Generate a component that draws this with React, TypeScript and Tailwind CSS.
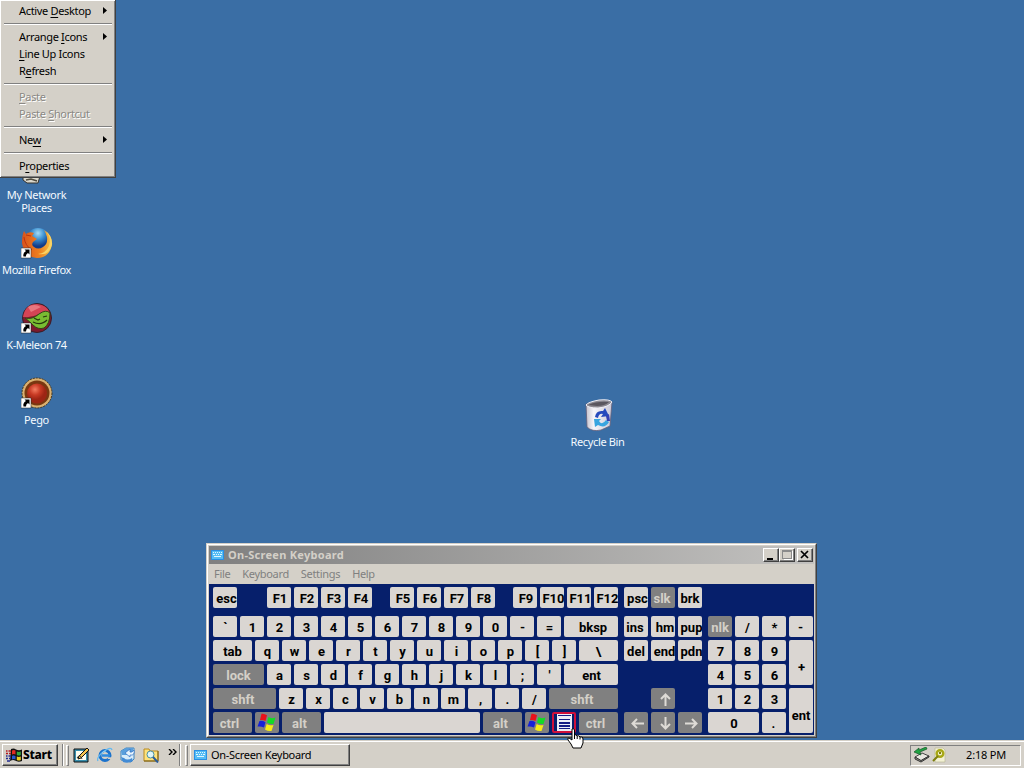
import type { ReactNode } from 'react'
import { clsx } from 'clsx'

type KeyDef = {
  label: ReactNode
  width?: string
  dark?: boolean
  focused?: boolean
  height?: string
  shift?: string
}

const k = (label: ReactNode, width = 'w-6', dark = false, shift = 'pl-px'): KeyDef => ({ label, width, dark, shift })

const long = 'pl-[3px]'

function KeyButton({ label, width = 'w-6', dark, focused, height = 'h-[21px] pt-px', shift = 'pl-px' }: KeyDef) {
  return (
    <button
      className={clsx(
        'flex flex-none items-center justify-center overflow-hidden rounded-[2px] font-[Roboto,sans-serif] text-[13px] leading-none font-bold whitespace-nowrap',
        focused ? 'bg-[#061f6b] ring-2 ring-[#d0103a] ring-inset' : dark ? 'bg-[#808080] text-[#d4d0c8]' : 'bg-[#dad6d2] text-black',
        width,
        height,
        shift
      )}
    >
      {label}
    </button>
  )
}

function KeyRow({ keys }: { keys: KeyDef[] }) {
  return (
    <div className="flex gap-[3px]">
      {keys.map((item, i) => (
        <KeyButton key={i} {...item} />
      ))}
    </div>
  )
}

function WindowsFlag() {
  return (
    <svg className="-mt-px mr-px h-[19px] w-[20px] flex-none" viewBox="0 0 20 19">
      <path d="M4.500 .8 Q7 .2 10 2.300 L8.500 8 Q6 6.500 3 7Z" fill="#e8111b" />
      <path d="M11.500 4 Q14 6 18.500 4.500 L16.500 11 Q13 11.500 10 9.500Z" fill="#12dc24" />
      <path d="M2.500 7.900 Q6 7.500 8.500 9.300 L7 14.500 Q4 13 .5 13.500Z" fill="#1520d8" />
      <path d="M9.700 11 Q12.500 13 16.500 12 L14.500 18 Q11 18.500 8 16.500Z" fill="#f6ed15" />
    </svg>
  )
}

function MenuGlyph() {
  return (
    <svg className="-mt-px h-[17px] w-[15px] flex-none" viewBox="0 0 15 17" shapeRendering="crispEdges">
      <path d="M0 0H15V17H0Z" fill="#eceef8" />
      <path d="M1 1H14V2H1ZM2 5H13V6H2ZM2 8H13V10H2ZM2 11H13V13H2ZM2 14H13V15H2Z" fill="#151c86" />
    </svg>
  )
}

function ArrowGlyph({ turn = 'rotate-0' }: { turn?: string }) {
  return (
    <svg className={clsx('h-[13px] w-[13px] flex-none', turn)} viewBox="0 0 13 13" fill="none" stroke="#dedbd6" strokeWidth="2">
      <path d="M1 6.500H13M6 2L1.500 6.500L6 11" />
    </svg>
  )
}

const functionKeys = {
  left: [k('F1', 'w-6', false, 'pl-[2px]'), k('F2', 'w-6', false, 'pl-[2px]'), k('F3', 'w-6', false, 'pl-[2px]'), k('F4', 'w-6', false, 'pl-[2px]')],
  middle: [k('F5', 'w-6', false, 'pl-[2px]'), k('F6', 'w-6', false, 'pl-[2px]'), k('F7', 'w-6', false, 'pl-[2px]'), k('F8', 'w-6', false, 'pl-[2px]')],
  right: [k('F9', 'w-6', false, 'pl-[2px]'), k('F10', 'w-6', false, long), k('F11', 'w-6', false, long), k('F12', 'w-6', false, long)],
  system: [k('psc', 'w-6', false, long), k('slk', 'w-6', true, 'pr-[2px]'), k('brk', 'w-6', false, 'pl-0')],
}

const mainRows: KeyDef[][] = [
  [...'`1234567890-='].map((c) => k(c)).concat(k('bksp', 'w-[54px]', false, 'pl-1')),
  [k('tab', 'w-[39px]', false, 'pl-0'), ...[...'qwertyuiop[]'].map((c) => k(c)), k('\\', 'w-[39px]', false, 'pl-0')],
  [k('lock', 'w-[51px]', true, 'pl-0'), ...[..."asdfghjkl;'"].map((c) => k(c)), k('ent', 'w-[54px]', false, 'pl-px')],
  [k('shft', 'w-[63px]', true, 'pr-[3px]'), ...[...'zxcvbnm,./'].map((c) => k(c)), k('shft', 'w-[69px]', true, 'pr-[3px]')],
  [
    k('ctrl', 'w-[39px]', true, 'pr-[6px]'),
    k(<WindowsFlag />, 'w-6', true),
    k('alt', 'w-[39px]', true, 'pr-1'),
    k('', 'w-[156px]'),
    k('alt', 'w-[39px]', true, 'pr-[4px]'),
    k(<WindowsFlag />, 'w-6', true),
    { label: <MenuGlyph />, focused: true, shift: 'pl-0' },
    k('ctrl', 'w-[39px]', true, 'pr-[6px]'),
  ],
]

const editRows = [
  [k('ins', 'w-6', false, 'pr-[2px]'), k('hm', 'w-6', false, 'pl-1'), k('pup', 'w-6', false, long)],
  [k('del', 'w-6', false, 'pl-0'), k('end', 'w-6', false, long), k('pdn', 'w-6', false, long)],
]

const numRows = [
  [k('7'), k('8'), k('9')],
  [k('4'), k('5'), k('6')],
  [k('1'), k('2'), k('3')],
  [k('0', 'w-[51px]'), k('.', 'w-6', false, 'pr-px')],
]

function KeyboardIcon() {
  return (
    <svg className="h-[12px] w-[14px] flex-none" viewBox="0 0 14 12" shapeRendering="crispEdges">
      <path d="M0 1H13V11H0Z" fill="#2a8fe4" />
      <path d="M1 2H12V10H1Z" fill="#55bdf5" />
      <path d="M2 3H3V4H2ZM4 3H5V4H4ZM6 3H7V4H6ZM8 3H9V4H8ZM10 3H11V4H10ZM2 5H4V6H2ZM5 5H6V6H5ZM7 5H8V6H7ZM9 5H11V6H9ZM3 7H10V8H3Z" fill="#dff5ff" />
    </svg>
  )
}

function CaptionButton({ children }: { children: ReactNode }) {
  return (
    <button className="h-[14px] w-4 border border-t-white border-r-[#404040] border-b-[#404040] border-l-white bg-[#d4d0c8] shadow-[inset_-1px_-1px_0_#808080]">
      <svg className="h-3 w-[14px]" viewBox="0 0 14 12" fill="none" shapeRendering="crispEdges">
        {children}
      </svg>
    </button>
  )
}

function OnScreenKeyboard() {
  return (
    <section className="absolute top-[543px] left-[206px] h-[195px] w-[611px] border border-t-[#d4d0c8] border-r-[#404040] border-b-[#404040] border-l-[#d4d0c8] bg-[#d4d0c8]">
      <div className="h-full border border-t-white border-r-[#808080] border-b-[#808080] border-l-white p-px">
        <header className="flex h-[18px] items-center bg-linear-to-r from-[#808080] to-[#c3c2c0] pr-px pl-[2px]">
          <KeyboardIcon />
          <h1 className="ml-[3px] flex-1 text-[11px] font-bold tracking-[0.28px] text-[#d4d0c8]">On-Screen Keyboard</h1>
          <CaptionButton>
            <path d="M3 9H9V11H3Z" fill="#000" />
          </CaptionButton>
          <CaptionButton>
            <path d="M2.500 1.500H11.500V9.500H2.500ZM2 2.500H11" stroke="#8a8a8a" />
            <path d="M3.500 10.500H12.500V2" stroke="#fff" />
          </CaptionButton>
          <div className="ml-[2px] flex">
            <CaptionButton>
              <path d="M3 2L10 9M10 2L3 9" stroke="#000" strokeWidth="1.700" shapeRendering="auto" />
            </CaptionButton>
          </div>
        </header>
        <nav className="flex h-5 items-center gap-3 pl-[5px] text-[11px] tracking-[-0.32px] text-[#808080]">
          <span>File</span>
          <span>Keyboard</span>
          <span>Settings</span>
          <span>Help</span>
        </nav>
        <div className="h-[151px] bg-[#061f6b] pt-[3px] pl-1">
          <div className="flex">
            <KeyRow keys={[k('esc', 'w-6', false, long)]} />
            <div className="ml-[30px]"><KeyRow keys={functionKeys.left} /></div>
            <div className="ml-[18px]"><KeyRow keys={functionKeys.middle} /></div>
            <div className="ml-[18px]"><KeyRow keys={functionKeys.right} /></div>
            <div className="ml-[6px]"><KeyRow keys={functionKeys.system} /></div>
          </div>
          <div className="mt-2 flex gap-[6px]">
            <div className="flex w-[405px] flex-col gap-[3px]">
              {mainRows.map((row, i) => (
                <KeyRow key={i} keys={row} />
              ))}
            </div>
            <div className="flex w-[78px] flex-col gap-[3px]">
              {editRows.map((row, i) => (
                <KeyRow key={i} keys={row} />
              ))}
              <div className="mt-6 flex justify-center">
                <KeyButton label={<ArrowGlyph turn="rotate-90" />} dark shift="pl-1" />
              </div>
              <KeyRow keys={[
                k(<ArrowGlyph />, 'w-6', true, 'pl-[3px]'),
                k(<ArrowGlyph turn="-rotate-90" />, 'w-6', true, 'pl-1'),
                k(<ArrowGlyph turn="rotate-180" />, 'w-6', true, 'pl-[2px]'),
              ]} />
            </div>
            <div className="flex w-[105px] flex-col gap-[3px]">
              <KeyRow keys={[k('nlk', 'w-6', true, 'pl-0'), k('/'), k('*'), k('-', 'w-6', false, 'pr-px')]} />
              <div className="flex gap-[3px]">
                <div className="flex flex-col gap-[3px]">
                  {numRows.map((row, i) => (
                    <KeyRow key={i} keys={row} />
                  ))}
                </div>
                <div className="flex flex-col gap-[3px]">
                  <KeyButton label="+" height="h-[45px] pt-[9px]" />
                  <KeyButton label="ent" height="h-[45px] pt-[9px]" shift="pl-0" />
                </div>
              </div>
            </div>
          </div>
        </div>
      </div>
    </section>
  )
}

function MenuItem({ before = '', mark, after = '', submenu, disabled }: { before?: string; mark: string; after?: string; submenu?: boolean; disabled?: boolean }) {
  return (
    <li className={clsx('flex h-[17px] items-center pr-[8px] pl-[17px]', disabled && 'text-[#8b8985] [text-shadow:1px_1px_0_#fff]')}>
      <span className="flex-1 whitespace-pre">
        {before}
        <span className="underline underline-offset-[1.500px]">{mark}</span>
        {after}
      </span>
      {submenu && (
        <svg className="h-[7px] w-1" viewBox="0 0 4 7">
          <path d="M0 0L4 3.500L0 7Z" />
        </svg>
      )}
    </li>
  )
}

function Divider() {
  return (
    <li className="flex h-[9px] items-center pr-[3px] pl-[2px]">
      <span className="h-[2px] flex-1 border-t border-b border-t-[#808080] border-b-white" />
    </li>
  )
}

function ContextMenu() {
  return (
    <ul className="absolute top-0 left-0 h-[178px] w-[116px] border-r border-b border-[#404040] bg-[#d4d0c8] pt-[2px] pl-[2px] text-[11px] leading-[13px] tracking-[-0.33px] text-black shadow-[inset_1px_1px_0_#fff,inset_-1px_-1px_0_#808080]">
      <MenuItem before="Active " mark="D" after="esktop" submenu />
      <Divider />
      <MenuItem before="Arrange " mark="I" after="cons" submenu />
      <MenuItem mark="L" after="ine Up Icons" />
      <MenuItem before="R" mark="e" after="fresh" />
      <Divider />
      <MenuItem mark="P" after="aste" disabled />
      <MenuItem before="Paste " mark="S" after="hortcut" disabled />
      <Divider />
      <MenuItem before="Ne" mark="w" submenu />
      <Divider />
      <MenuItem before="P" mark="r" after="operties" />
    </ul>
  )
}

function ShortcutArrow() {
  return (
    <g>
      <path d="M0 21H10V31H0Z" fill="#fff" stroke="#222" strokeWidth=".5" />
      <path d="M3.500 22.500H8.500V27.500L7 26Q4.800 27 5 29.500H2.500Q1.500 26 5 24Z" fill="#000" />
    </g>
  )
}

function FirefoxIcon() {
  return (
    <svg className="h-8 w-8" viewBox="0 0 32 32">
      <defs>
        <radialGradient id="globe" cx=".5" cy=".2">
          <stop offset="0" stopColor="#a5dcf5" />
          <stop offset=".5" stopColor="#3a8ed0" />
          <stop offset="1" stopColor="#123b88" />
        </radialGradient>
        <linearGradient id="fox" x1="0" x2="1">
          <stop offset="0" stopColor="#d9521c" />
          <stop offset=".6" stopColor="#ee8220" />
          <stop offset="1" stopColor="#f5c64a" />
        </linearGradient>
      </defs>
      <circle cx="17" cy="14" r="13" fill="url(#globe)" />
      <path d="M3 4L5 7Q8 4 13 6L11 9L16 12L12 15Q10 18 13 20Q17 23 22 20Q27 17 26 10Q25 6 23 3Q32 9 31 18Q28 31 16 31Q3 30 1 16Q1 8 3 4Z" fill="url(#fox)" />
      <path d="M25 4Q31 12 28 19Q25 26 17 27Q29 29 31 17Q31 9 25 4Z" fill="#f9d365" />
      <path d="M3 10Q4 19 11 23M5 8L10 9" fill="none" stroke="#bd3510" />
      <ShortcutArrow />
    </svg>
  )
}

function MelonIcon() {
  return (
    <svg className="h-8 w-8" viewBox="0 0 32 32">
      <circle cx="16" cy="16" r="14.500" fill="#7d1a2c" stroke="#34202a" />
      <path d="M2 15Q4 2 16 2Q26 3 29 11Q25 8 18 12Q10 16 3 15Z" fill="#d44455" />
      <path d="M7 5Q13 1 20 5L10 10Z" fill="#f08d91" opacity=".7" />
      <path d="M4 16Q11 18 18 12Q25 7 29 11Q29 22 23 26Q17 28 12 23Q8 19 4 16Z" fill="#79bd32" stroke="#354518" />
      <path d="M13 16L17 18L19 17M22 15L26 14M12 20Q20 24 26 18" fill="none" stroke="#26370e" strokeWidth="1.200" />
      <ShortcutArrow />
    </svg>
  )
}

function PegoIcon() {
  return (
    <svg className="h-8 w-8" viewBox="0 0 32 32">
      <defs>
        <radialGradient id="marble" cx=".4" cy=".3">
          <stop offset="0" stopColor="#f47d61" />
          <stop offset=".55" stopColor="#c83a24" />
          <stop offset="1" stopColor="#9d2514" />
        </radialGradient>
      </defs>
      <circle cx="16" cy="16" r="15" fill="#d9b070" stroke="#44351e" strokeDasharray="2 1" />
      <circle cx="16" cy="16" r="12.500" fill="#793710" />
      <circle cx="16" cy="16.500" r="10" fill="url(#marble)" />
      <ShortcutArrow />
    </svg>
  )
}

function RecycleIcon() {
  return (
    <svg className="h-8 w-8" viewBox="0 0 32 32">
      <defs>
        <linearGradient id="bin" x1="0" x2="1">
          <stop offset="0" stopColor="#c5c2cc" />
          <stop offset=".3" stopColor="#f6f5fa" />
          <stop offset="1" stopColor="#cbc8d6" />
        </linearGradient>
      </defs>
      <path d="M4 5L5 28Q10 33 19 31L28 27L30 3Z" fill="url(#bin)" stroke="#655f78" strokeWidth=".8" />
      <path d="M4 6Q6 3 17 1Q28 0 30 3Q27 8 16 9Q6 9 4 6Z" fill="#8d8a92" stroke="#eeedf5" />
      <path d="M6 6Q15 2 27 3Q23 7 15 7Z" fill="#5a565f" />
      <path d="M13 18Q14 11 21 12L23 9L27 17L19 18L21 15Q17 14 16 19Z" fill="#2549bd" />
      <path d="M12 20L19 20L17 22Q20 27 24 21L27 23Q23 30 16 26L13 28Z" fill="#38a5e0" />
      <path d="M24 17L27 15L28 22L25 22Z" fill="#3340b4" />
    </svg>
  )
}

const shortcuts = [
  { name: 'Mozilla Firefox', icon: <FirefoxIcon />, place: 'top-[227px] left-0' },
  { name: 'K-Meleon 74', icon: <MelonIcon />, place: 'top-[302px] left-0' },
  { name: 'Pego', icon: <PegoIcon />, place: 'top-[377px] left-0' },
  { name: 'Recycle Bin', icon: <RecycleIcon />, place: 'top-[399px] left-[561px]' },
]

function NetworkShortcut() {
  return (
    <div className="absolute top-[152px] left-0 flex w-[73px] flex-col items-center text-center text-[11px] leading-[13px] tracking-[-0.33px] text-[#f4faff]">
      <svg className="h-8 w-8" viewBox="0 0 32 32">
        <path d="M2 24H19L17 31H6L2 28Z" fill="#d9d7cc" stroke="#35322c" />
        <path d="M5 28L10 27L16 29" fill="none" stroke="#4f4a3d" strokeWidth="1.500" />
      </svg>
      <span className="mt-1 w-[66px]">My Network Places</span>
    </div>
  )
}

function Grip() {
  return <span className="h-[21px] w-[3px] border border-t-white border-r-[#808080] border-b-[#808080] border-l-white" />
}

function Split() {
  return <span className="h-[22px] w-[2px] border-l border-l-[#808080] bg-white" />
}

function StartFlag() {
  return (
    <svg className="h-[15px] w-4 flex-none" viewBox="0 0 16 15">
      <path d="M5 1Q8 0 10 1.500Q13 3 16 1.500V13Q12 14.500 9 12.500Q7 11.500 4 13Z" fill="#111" />
      <path d="M6 2.500Q8 1.500 9.500 2.500V6.500Q8 5.500 6 6.500Z" fill="#e22b22" />
      <path d="M10.800 3.500Q13 4.300 14.800 3.500V7Q13 8 10.800 7Z" fill="#31a840" />
      <path d="M6 7.800Q8 7 9.500 8V11.500Q8 10.500 6 11.500Z" fill="#2958cf" />
      <path d="M10.800 8.500Q13 9.300 14.800 8.500V12Q13 13 10.800 12Z" fill="#e9ce25" />
      <path d="M0 3H1.500M2.500 3H5M0 5.500H2M3 5.500H5" stroke="#b31b20" strokeWidth="1.500" />
      <path d="M0 8H1.500M2.500 8H5M0 10.500H2M3 10.500H5M1 13H4" stroke="#222b8f" strokeWidth="1.500" />
    </svg>
  )
}

function DesktopIcon() {
  return (
    <svg className="h-4 w-[17px]" viewBox="0 0 17 16">
      <path d="M1 2H15V15H1Z" fill="#378fae" stroke="#111" />
      <path d="M3 4H13V13H3Z" fill="#fffef0" />
      <path d="M6 9L14 1L16 3L8 11L5 12Z" fill="#f6c54d" stroke="#111" />
      <path d="M4 11Q7 6 9 12" fill="none" stroke="#333" />
    </svg>
  )
}

function ExplorerIcon() {
  return (
    <svg className="h-4 w-4" viewBox="0 0 16 16" fill="none">
      <circle cx="8" cy="8.500" r="5" stroke="#1b72cc" strokeWidth="3" />
      <path d="M5 8.500H13" stroke="#2f8ce0" strokeWidth="2.500" />
      <path d="M11 10.300H16V12H11Z" fill="#d4d0c8" />
      <path d="M1 14Q-1 11 6 5Q14-1 15 3" stroke="#65b9ef" strokeWidth="1.300" />
      <path d="M5 6Q6 4 9 4" stroke="#8dd0f6" />
    </svg>
  )
}

function MailIcon() {
  return (
    <svg className="h-4 w-4" viewBox="0 0 16 16">
      <path d="M1 4L6 1H14V12L11 15L1 13Z" fill="#d8ecfa" stroke="#3e83bc" />
      <path d="M1 4L6 1H13V4L9 8L2 8Z" fill="#5a9fdc" />
      <path d="M14 3Q15 9 10 8V10L5 6L10 2V5Q12 6 14 3Z" fill="#e8f4fc" stroke="#2c6ec4" strokeWidth=".7" />
      <path d="M3 15L1 10L4 11Q7 14 12 11L13 14Q8 17 3 15Z" fill="#438bd5" />
    </svg>
  )
}

function SearchFolderIcon() {
  return (
    <svg className="h-4 w-4" viewBox="0 0 16 16">
      <path d="M1 2H6L7 4H15V14H1Z" fill="#ffe27b" stroke="#b98a20" />
      <path d="M1 14H15V4" fill="none" stroke="#755f1b" />
      <circle cx="7.500" cy="7.500" r="3.500" fill="#dff5f8" stroke="#4a8fa0" />
      <path d="M10 10L15 15.500" stroke="#2c5d98" strokeWidth="2" />
    </svg>
  )
}

function SafelyRemoveIcon() {
  return (
    <svg className="h-4 w-[17px]" viewBox="0 0 17 16">
      <path d="M2 10L9 6L16 9L8 14Z" fill="#e8e7e1" stroke="#444" />
      <path d="M2 10V12L8 15L16 10V9L8 13.500Z" fill="#99978f" stroke="#333" />
      <path d="M1 5L6 1V3L13 0L14 2L7 5L8 8Z" fill="#20a343" stroke="#155427" strokeWidth=".7" />
    </svg>
  )
}

function TrayKeyIcon() {
  return (
    <svg className="ml-[2px] h-4 w-[14px]" viewBox="0 0 14 16">
      <path d="M3 1H11L13 3V15H3Z" fill="#f3f1d3" stroke="#b9b79a" strokeWidth=".7" />
      <circle cx="8" cy="6.500" r="3.300" fill="none" stroke="#a8a816" strokeWidth="2.400" />
      <path d="M6 9L1 14M7 6H9" stroke="#7e7f0d" strokeWidth="2" />
    </svg>
  )
}

function Taskbar() {
  return (
    <footer className="mt-auto flex h-7 items-center border-t border-[#d4d0c8] bg-[#d4d0c8] pt-px pr-[3px] pl-[2px] text-[11px] text-black shadow-[inset_0_1px_0_#fff]">
      <button className="flex h-[22px] w-[56px] items-center gap-px border border-t-white border-r-[#404040] border-b-[#404040] border-l-white pl-[3px] shadow-[inset_-1px_-1px_0_#808080]">
        <StartFlag />
        <span className="text-[12px] font-extrabold tracking-[-0.3px]">Start</span>
      </button>
      <div className="ml-1 flex items-center gap-[2px]">
        <Split />
        <Grip />
      </div>
      <div className="ml-[4px] flex items-center gap-[7px]">
        <DesktopIcon />
        <ExplorerIcon />
        <MailIcon />
        <SearchFolderIcon />
      </div>
      <svg className="mb-[7px] ml-[9px] h-[6px] w-[9px]" viewBox="0 0 9 6" fill="none" stroke="#000" strokeWidth="1.400">
        <path d="M1 0L4 3L1 6M5 0L8 3L5 6" />
      </svg>
      <div className="ml-[2px] flex items-center gap-1">
        <Split />
        <Grip />
      </div>
      <button className="ml-[2px] flex h-[22px] w-[160px] items-center gap-[3px] border border-t-white border-r-[#404040] border-b-[#404040] border-l-white pl-[3px] shadow-[inset_-1px_-1px_0_#808080]">
        <KeyboardIcon />
        <span className="tracking-[-0.3px]">On-Screen Keyboard</span>
      </button>
      <div className="ml-auto flex h-[21px] w-[111px] items-center border border-t-[#808080] border-r-white border-b-white border-l-[#808080] pl-[2px]">
        <SafelyRemoveIcon />
        <TrayKeyIcon />
        <span className="ml-auto pt-px pr-[14px] tracking-[-0.2px]">2:18 PM</span>
      </div>
    </footer>
  )
}

export default function App() {
  return (
    <main className="relative flex h-[768px] w-[1024px] cursor-default flex-col overflow-hidden bg-[#3a6ea5] font-['Noto_Sans',sans-serif] select-none">
      <NetworkShortcut />
      {shortcuts.map((item) => (
        <div key={item.name} className={clsx('absolute flex w-[73px] flex-col items-center text-[11px] leading-[13px] tracking-[-0.36px] whitespace-nowrap text-[#f4faff]', item.place)}>
          {item.icon}
          <span className="mt-1">{item.name}</span>
        </div>
      ))}
      <ContextMenu />
      <OnScreenKeyboard />
      <Taskbar />
      <svg className="absolute top-[728px] left-[567px] h-[21px] w-[17px]" viewBox="0 0 17 21">
        <path d="M5 1Q7 0 7.500 2V7Q9 6 10 8Q12 7 13 9Q16 8 16 11V15L14 20H6L4 16L1 12Q0 10 2 10L5 12Z" fill="#fff" stroke="#000" />
        <path d="M7.500 7V11M10.200 8V11M13 9V11.500" stroke="#000" />
      </svg>
    </main>
  )
}
